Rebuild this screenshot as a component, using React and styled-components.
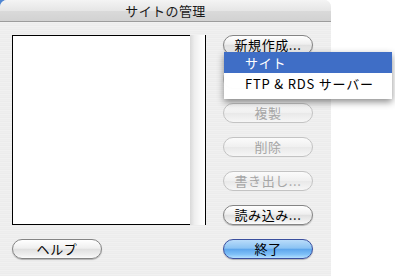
import styled, { createGlobalStyle } from "styled-components";

const GlobalStyle = createGlobalStyle`
  html, body {
    margin: 0;
    padding: 0;
    background: #ffffff;
  }
  body {
    font-family: "Noto Sans CJK JP", "Liberation Sans", sans-serif;
    font-size: 13px;
    color: #000;
  }
`;

// the second button sits under the open menu, so it shows no label
const buttons = [
  { id: "new", label: "新規作成...", menu: true },
  { id: "edit", label: "", disabled: true },
  { id: "dup", label: "複製", disabled: true },
  { id: "del", label: "削除", disabled: true },
  { id: "export", label: "書き出し...", disabled: true },
  { id: "import", label: "読み込み..." },
];

const menuItems = ["サイト", "FTP & RDS サーバー"];

export default function App() {
  return (
    <Page>
      <GlobalStyle />
      <Window>
        <TitleBar>サイトの管理</TitleBar>
        <Body>
          <ListFrame>
            <SiteList />
            <ScrollTrack />
          </ListFrame>

          <ButtonColumn>
            {buttons.map((b) => (
              <ButtonSlot key={b.id}>
                <AquaButton disabled={b.disabled}>{b.label}</AquaButton>
                {b.menu && (
                  <PopupMenu>
                    {menuItems.map((item, i) => (
                      <MenuItem key={item} $active={i === 0}>
                        {item}
                      </MenuItem>
                    ))}
                  </PopupMenu>
                )}
              </ButtonSlot>
            ))}
          </ButtonColumn>

          <AquaButton>ヘルプ</AquaButton>
          <AquaButton $primary>終了</AquaButton>
        </Body>
      </Window>
    </Page>
  );
}

const Page = styled.div`
  width: 395px;
  height: 276px;
  background: linear-gradient(135deg, #4f86d2 0 5px, #ffffff 5px);
  overflow: hidden;
`;

const Window = styled.div`
  position: relative;
  width: 331px;
  height: 276px;
  display: flex;
  flex-direction: column;
  border-radius: 7px 7px 0 0;
  background: repeating-linear-gradient(
    0deg,
    #ededed 0 1px,
    #f1f1f1 1px 2px,
    #ececec 2px 3px,
    #efefef 3px 4px
  );
`;

const TitleBar = styled.div`
  height: 21px;
  flex: none;
  display: flex;
  align-items: center;
  justify-content: center;
  border-radius: 7px 7px 0 0;
  border-bottom: 1px solid #9c9c9c;
  background: linear-gradient(#f4f4f4, #e6e6e6 50%, #dadada 51%, #d2d2d2);
  font-size: 13px;
  color: #1a1a1a;
  letter-spacing: 0.4px;
`;

const Body = styled.div`
  display: grid;
  grid-template-columns: 194px 90px;
  grid-template-rows: 190px 20px;
  column-gap: 17px;
  row-gap: 14px;
  padding: 13px 0 0 12px;
`;

const ListFrame = styled.div`
  display: flex;
  border-right: 1px solid #000;
`;

const SiteList = styled.div`
  flex: 1;
  background: #ffffff;
  border: 1px solid #000;
  border-right: none;
`;

const ScrollTrack = styled.div`
  width: 15px;
  background: linear-gradient(90deg, #d9d9d9, #eeeeee 30%, #fafafa 70%, #ffffff);
`;

const ButtonColumn = styled.div`
  display: flex;
  flex-direction: column;
  gap: 14px;
`;

const ButtonSlot = styled.div`
  position: relative;
  display: flex;
`;

const AquaButton = styled.button`
  width: 90px;
  height: 20px;
  padding: 0 0 1px;
  display: flex;
  align-items: center;
  justify-content: center;
  font-family: "Noto Sans CJK JP", "Liberation Sans", sans-serif;
  font-size: 13px;
  line-height: 18px;
  letter-spacing: 0.6px;
  border-radius: 10px;
  border: 1px solid ${({ $primary, disabled }) =>
    $primary ? "#3b4f9e" : disabled ? "#c3c3c3" : "#848484"};
  color: ${({ disabled }) => (disabled ? "#a6a6a6" : "#000")};
  background: ${({ $primary, disabled }) =>
    $primary
      ? "linear-gradient(#b9dcfa, #8cc3f3 45%, #5ea6ec 52%, #7fc0f7 80%, #b4e0ff)"
      : disabled
      ? "linear-gradient(#fbfbfb, #f0f0f0 48%, #e9e9e9 52%, #f6f6f6)"
      : "linear-gradient(#ffffff, #efefef 45%, #e0e0e0 52%, #f0f0f0 85%, #fbfbfb)"};
  box-shadow: ${({ disabled }) =>
    disabled ? "none" : "0 1px 1px rgba(0, 0, 0, 0.25)"};
`;

const PopupMenu = styled.div`
  position: absolute;
  top: 17px;
  left: 1px;
  width: 168px;
  padding: 0 0 5px;
  background: rgba(255, 255, 255, 0.96);
  box-shadow: 0 3px 7px rgba(0, 0, 0, 0.45);
  z-index: 2;
`;

const MenuItem = styled.div`
  height: 21px;
  display: flex;
  align-items: center;
  padding-left: 21px;
  font-size: 13px;
  letter-spacing: 0.8px;
  white-space: nowrap;
  color: ${({ $active }) => ($active ? "#ffffff" : "#000")};
  background: ${({ $active }) => ($active ? "#3f6ec6" : "transparent")};
`;
